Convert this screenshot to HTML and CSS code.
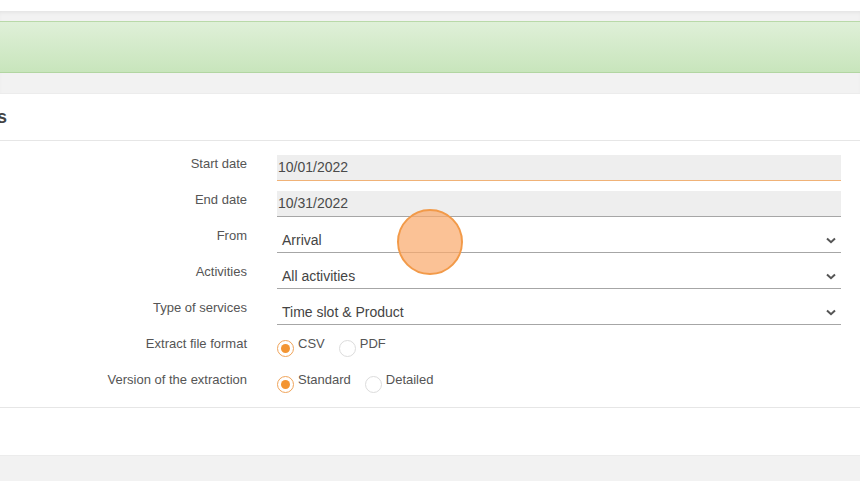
FILE: index.html
```html
<!DOCTYPE html>
<html>
<head>
    <title>Extractions</title>
    <link rel="stylesheet" href="styles.css">
</head>
<body>
    <div class="topbar"></div>
    <div class="band">
        <div class="alert"></div>
    </div>
    <div class="panel">
        <h2 class="panel-title">Extractions</h2>
        <div class="form">
            <div class="row">
                <label class="label">Start date</label>
                <div class="input focused">10/01/2022</div>
            </div>
            <div class="row">
                <label class="label">End date</label>
                <div class="input">10/31/2022</div>
            </div>
            <div class="row">
                <label class="label">From</label>
                <div class="select">
                    <span>Arrival</span>
                    <svg class="chevron" width="10" height="7" viewBox="0 0 10 7"><path d="M1 1.5 L5 5.2 L9 1.5" fill="none" stroke="#555" stroke-width="2"/></svg>
                </div>
            </div>
            <div class="row">
                <label class="label">Activities</label>
                <div class="select">
                    <span>All activities</span>
                    <svg class="chevron" width="10" height="7" viewBox="0 0 10 7"><path d="M1 1.5 L5 5.2 L9 1.5" fill="none" stroke="#555" stroke-width="2"/></svg>
                </div>
            </div>
            <div class="row">
                <label class="label">Type of services</label>
                <div class="select">
                    <span>Time slot &amp; Product</span>
                    <svg class="chevron" width="10" height="7" viewBox="0 0 10 7"><path d="M1 1.5 L5 5.2 L9 1.5" fill="none" stroke="#555" stroke-width="2"/></svg>
                </div>
            </div>
            <div class="row">
                <label class="label">Extract file format</label>
                <div class="radios">
                    <span class="radio checked"></span><span class="radio-text">CSV</span>
                    <span class="radio"></span><span class="radio-text">PDF</span>
                </div>
            </div>
            <div class="row">
                <label class="label">Version of the extraction</label>
                <div class="radios">
                    <span class="radio checked"></span><span class="radio-text">Standard</span>
                    <span class="radio"></span><span class="radio-text">Detailed</span>
                </div>
            </div>
        </div>
        <div class="panel-footer"></div>
    </div>
    <div class="bottom"></div>
    <div class="click-marker"></div>
</body>
</html>
```

FILE: styles.css
```css
body {
    margin: 0;
    font-family: "Liberation Sans", Arial, sans-serif;
    background: #fff;
    overflow: hidden;
}
.topbar {
    height: 11px;
    background: #fff;
}
.band {
    background: #f2f2f2;
    box-shadow: inset 0 3px 4px -2px rgba(0, 0, 0, 0.08);
    padding: 10px 0 20px 0;
    border-bottom: 1px solid #ececec;
}
.alert {
    height: 50px;
    background: linear-gradient(to bottom, #dff0d8, #c8e5bc);
    border-top: 1px solid #b9d9a9;
    border-bottom: 1px solid #b2d6a2;
}
.panel {
    background: #fff;
}
.panel-title {
    margin: 0 0 0 -91px;
    height: 47px;
    line-height: 46px;
    font-size: 18px;
    font-weight: bold;
    color: #444;
    border-bottom: 1px solid #e6e6e6;
    box-sizing: border-box;
}
.form {
    padding: 14px 19px 0 0;
}
.row {
    display: grid;
    grid-template-columns: 247px 1fr;
    column-gap: 30px;
    height: 26px;
    margin-bottom: 10px;
}
.label {
    text-align: right;
    font-size: 13px;
    color: #555;
    line-height: 16px;
    padding-top: 1px;
}
.input {
    background: #eeeeee;
    border-bottom: 1px solid #a6a6a6;
    font-size: 14px;
    color: #4a4a4a;
    padding: 2px 1px 0 1px;
    box-sizing: border-box;
    height: 26px;
    line-height: 20px;
}
.input.focused {
    border-bottom-color: #f0b277;
}
.select {
    display: flex;
    justify-content: space-between;
    align-items: center;
    border-bottom: 1px solid #a6a6a6;
    font-size: 14px;
    color: #444;
    padding: 0 5px 0 5px;
    box-sizing: border-box;
    height: 26px;
}
.chevron {
    margin-top: 2px;
}
.radios {
    display: flex;
    align-items: flex-start;
    font-size: 13px;
    color: #555;
    padding-top: 1px;
}
.radio {
    width: 17px;
    height: 17px;
    box-sizing: border-box;
    border: 1px solid #dcdcdc;
    border-radius: 50%;
    margin-top: 4px;
    position: relative;
    background: #fff;
}
.radio.checked {
    border-color: #f0a45a;
}
.radio.checked::after {
    content: "";
    position: absolute;
    left: 3px;
    top: 3px;
    width: 9px;
    height: 9px;
    border-radius: 50%;
    background: #f39533;
}
.radio-text {
    margin-left: 4px;
    margin-right: 14px;
    line-height: 15px;
}
.panel-footer {
    height: 47px;
    border-top: 1px solid #e6e6e6;
}
.bottom {
    height: 40px;
    background: #f2f2f2;
    border-top: 1px solid #ececec;
}
.click-marker {
    position: absolute;
    left: 397px;
    top: 209px;
    width: 62px;
    height: 62px;
    border-radius: 50%;
    border: 2px solid #f29a49;
    background: rgba(250, 170, 110, 0.72);
}
```
